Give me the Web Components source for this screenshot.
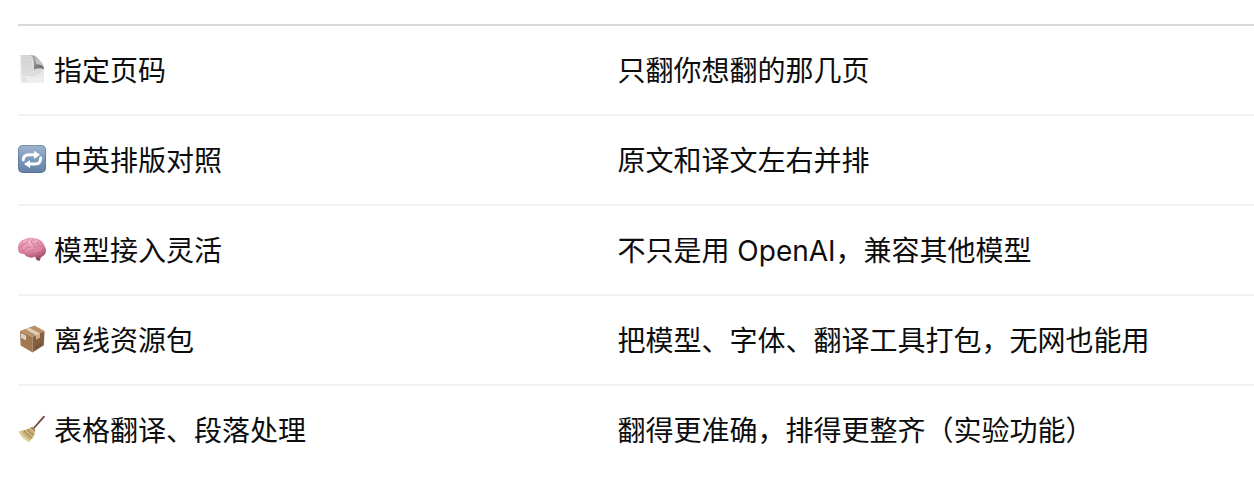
<!DOCTYPE html>
<html lang="zh-CN">
<head>
<meta charset="utf-8">
<meta name="viewport" content="width=device-width, initial-scale=1">
<title>功能列表</title>
<style>
  body {
    margin: 0;
    background: #fff;
    color: #0d0d0d;
    font: 28px/44px Inter, "Noto Sans CJK SC", sans-serif;
  }
</style>
</head>
<body>
<page-section>
  <feature-table></feature-table>
</page-section>

<script>
class PageSection extends HTMLElement {
  constructor() {
    super();
    this.attachShadow({ mode: 'open' }).innerHTML = `
      <style>:host { display: block; padding: 24px 0 24px 18px; }</style>
      <slot></slot>`;
  }
}

const ICONS = {
  page: `
    <defs>
      <linearGradient id="p" x2="0" y2="1"><stop stop-color="#d6d6d6"/><stop offset="1" stop-color="#f0f0f0"/></linearGradient>
      <linearGradient id="f" x1="0" y1="0" x2="1" y2="1"><stop stop-color="#b5b5b5"/><stop offset=".6" stop-color="#808080"/><stop offset="1" stop-color="#666"/></linearGradient>
    </defs>
    <path d="M2.500 0H14q3 0 5 2l5 6q2 2 2 5v15H2.500z" fill="url(#p)"/>
    <path d="M4 3h9M4 6h10M4 8h10M4 10h10M4 12h11M4 14h18M4 16h19M4 18h18M4 20h15M4 24h4M4 26h5" stroke="#cacaca" stroke-width=".7"/>
    <path d="M12.500 0q4 2 3.500 14.500 6-2.500 10 0Q25.500 10 21 5 17 0 12.500 0z" fill="url(#f)"/>
    <path d="M16.500 2Q24 5.500 26 12 22 8.500 18 9.500 18 5 16.500 2z" fill="#c4c4c4"/>`,
  repeat: `
    <defs>
      <linearGradient id="b" x2="0" y2="1"><stop stop-color="#9fb5cf"/><stop offset=".5" stop-color="#7e9abb"/><stop offset="1" stop-color="#6581a5"/></linearGradient>
    </defs>
    <rect width="28" height="28" rx="5" fill="#587396"/>
    <rect x=".7" y=".5" width="26.600" height="26.500" rx="4.600" fill="url(#b)"/>
    <path d="M5.300 15C5.300 11 7.500 9.800 11 9.800h5.500M22.700 13C22.700 17.500 20 19 17 19h-5.500" fill="none" stroke="#fff" stroke-width="2.900" stroke-linecap="round"/>
    <path d="M16 5.700v8.200l6-4.100zM12 14.900v8.200l-6-4.100z" fill="#fff"/>`,
  brain: `
    <defs>
      <radialGradient id="r" cx=".4" cy=".25" r=".75"><stop stop-color="#f3afc3"/><stop offset=".65" stop-color="#df87a4"/><stop offset="1" stop-color="#ad5577"/></radialGradient>
    </defs>
    <path d="M17 18l6 1.500q.5 3-1.500 6.500l-3-1-2-5z" fill="#8e4b68"/>
    <path d="M0 15C-1 9 3 5.500 6 4.500 10 2.500 14 2.500 17 3.500 22 4 25.500 7 26.500 11c2.500 3.500 1.700 8-1.500 10-2.500 2.200-6 2-7.500.6-2 .5-4 2-7 .5C8 21.400 7 20 6.500 19 3 19 1 18 0 15z" fill="url(#r)"/>
    <path d="M2.500 13q1-4 4.500-4.500M4 16q3 .5 4-2t4-2M9 6q-2 2.500 1 3.500M14 5q-2 2 .5 3.500T16 12q3-.5 4 2M20 7q-2 1.500 0 3.500t4 1M6.500 18.500q3 .5 5-2t6-1.500M17.500 21q1.500-4 7-4.500M12 19q3-2 5.500-1M22 20q1.500-.5 3.500 0" fill="none" stroke="#bd6484" stroke-width=".7" stroke-linecap="round"/>
    <path d="M6 7q2-1.500 3-1.500M11.500 7q0-2 2-2.500M16.500 7q1-2 3-1" fill="none" stroke="#ffd0dc" stroke-width=".7" stroke-linecap="round"/>`,
  box: `
    <path d="M2 6L16.500 .6 26.500 6 14.500 12z" fill="#b99067"/>
    <path d="M2 6l12.500 6v15.500L2.600 20.500z" fill="#a27850"/>
    <path d="M26.500 6l-12 6v15.500l11.400-7.200z" fill="#855f40"/>
    <path d="M7.500 4L11 2.700 21.800 8.300v4.200l-3.800 2V10.200z" fill="#e0d0b8"/>
    <path d="M18 10.200l3.800-1.900v4.200l-3.800 2z" fill="#cbb08a"/>
    <path d="M3 8.200l5 2.500v4.500l-4.800-2.500z" fill="#e6e3de"/>
    <path d="M3.500 10l4 2M3.500 11.600l4 2" stroke="#aaa" stroke-width=".5"/>
    <path d="M18 21l1.600-1v2.500L18 23.500zM21.500 18.700l1.600-1v2.600l-1.600 1z" fill="#65452b"/>`,
  broom: `
    <path d="M26 1.600L15 14" stroke="#603c33" stroke-width="1.700" stroke-linecap="round"/>
    <path d="M25.700 1.500L15 13.500" stroke="#94695a" stroke-width=".6"/>
    <path d="M12.500 12.500q2-.8 4 1.200 1 1.600.6 3.300-.6 3.500-2.600 6L11 27Q4 24 .6 16.500l5.900-1.600q3-.4 6-2.400z" fill="#d0b880"/>
    <path d="M.6 16.500Q4 24 11 27l1.600-1.700Q6 22.500 3 15.900z" fill="#e2d39f"/>
    <path d="M6 15.200q3 5.300 8.500 7.800M9.500 14.200q2.300 4 6.500 6" fill="none" stroke="#a1864f" stroke-width="1.200"/>
    <path d="M13.500 14.500L4.500 19M14.500 15.500L7 22M15 16.500l-5 8" stroke="#b89d67" stroke-width=".5"/>
    <path d="M12.500 12.500l1.500-.5 3 2.700.2 1.600z" fill="#8f7046"/>`
};

class EmojiIcon extends HTMLElement {
  constructor() {
    super();
    this.attachShadow({ mode: 'open' });
  }
  connectedCallback() {
    this.shadowRoot.innerHTML = `
      <style>
        :host { display: block; flex: none; width: 28px; height: 28px; margin-bottom: 4px; }
        svg { display: block; width: 100%; height: 100%; }
      </style>
      <svg viewBox="0 0 28 28" aria-hidden="true">${ICONS[this.getAttribute('name')]}</svg>`;
  }
}

class FeatureLabel extends HTMLElement {
  constructor() {
    super();
    this.attachShadow({ mode: 'open' });
  }
  connectedCallback() {
    this.shadowRoot.innerHTML = `
      <style>:host { display: flex; align-items: center; gap: 8px; }</style>
      <emoji-icon name="${this.getAttribute('icon')}"></emoji-icon>
      <span><slot></slot></span>`;
  }
}

class FeatureTable extends HTMLElement {
  constructor() {
    super();
    this.attachShadow({ mode: 'open' }).innerHTML = `
      <style>
        :host { display: block; }
        table { width: 100%; table-layout: fixed; border-spacing: 0; border-top: 2px solid #d9d9d9; }
        th, td { padding: 23px 0 21px; border-bottom: 2px solid #f1f1f1; font-weight: 400; text-align: left; vertical-align: middle; }
        th { width: 48.5%; }
        tr:last-child > * { border-bottom: 0; }
      </style>
      <table>
        <tbody>
          <tr><th scope="row"><feature-label icon="page">指定页码</feature-label></th><td>只翻你想翻的那几页</td></tr>
          <tr><th scope="row"><feature-label icon="repeat">中英排版对照</feature-label></th><td>原文和译文左右并排</td></tr>
          <tr><th scope="row"><feature-label icon="brain">模型接入灵活</feature-label></th><td>不只是用 OpenAI，兼容其他模型</td></tr>
          <tr><th scope="row"><feature-label icon="box">离线资源包</feature-label></th><td>把模型、字体、翻译工具打包，无网也能用</td></tr>
          <tr><th scope="row"><feature-label icon="broom">表格翻译、段落处理</feature-label></th><td>翻得更准确，排得更整齐（实验功能）</td></tr>
        </tbody>
      </table>`;
  }
}

customElements.define('page-section', PageSection);
customElements.define('emoji-icon', EmojiIcon);
customElements.define('feature-label', FeatureLabel);
customElements.define('feature-table', FeatureTable);
</script>
</body>
</html>
